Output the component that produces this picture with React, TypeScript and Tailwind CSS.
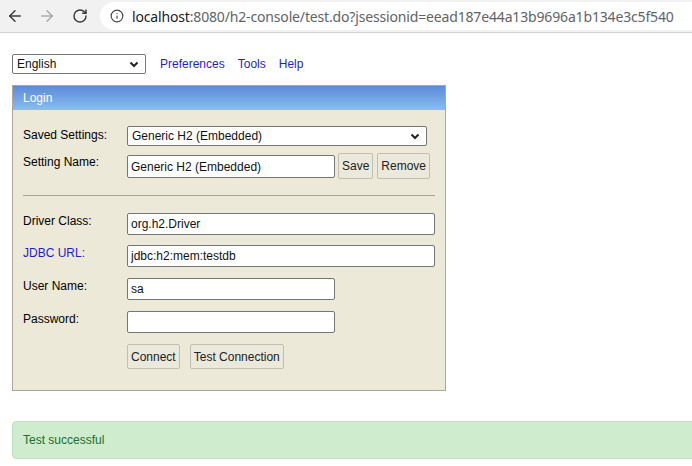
import { ArrowLeft, ArrowRight, RotateCw, Info } from 'lucide-react'

const Chevron = () => (
  <svg width="10" height="7" viewBox="0 0 10 7" className="shrink-0">
    <path d="M1.5 1.5 L5 5 L8.5 1.5" fill="none" stroke="#222" strokeWidth="2" />
  </svg>
)

function FakeSelect({ value, width }: { value: string; width: string }) {
  return (
    <div
      className={`${width} h-[20px] flex items-center justify-between bg-white border border-[#767676] rounded-[2px] pl-[4px] pr-[6px] text-[#111]`}
    >
      <span>{value}</span>
      <Chevron />
    </div>
  )
}

function Field({ value, wide }: { value: string; wide?: boolean }) {
  return (
    <input
      readOnly
      defaultValue={value}
      className={`${wide ? 'w-[308px]' : 'w-[208px]'} h-[22px] bg-white border border-[#767676] rounded-[2px] px-[3px] text-[#111] outline-none`}
    />
  )
}

function Btn({ label }: { label: string }) {
  return (
    <button className="h-[25px] px-[3px] bg-[#ebe8dc] border border-[#c2beb1] rounded-[2px] text-[#222]">
      {label}
    </button>
  )
}

export default function App() {
  const labelCls = 'w-[104px] shrink-0 leading-[14px] pt-[1px]'

  return (
    <div className="w-[692px] h-[466px] overflow-hidden bg-white font-['Liberation_Sans',Arial,sans-serif] text-[12px] text-black">
      {/* browser chrome */}
      <div className="h-[33px] bg-[#f1f1f1] border-b border-[#d3d3d3] flex items-center">
        <div className="flex items-center pl-[6px] gap-[14px]">
          <ArrowLeft size={18} strokeWidth={2} color="#3c3c3c" />
          <ArrowRight size={18} strokeWidth={2} color="#a9a9a9" />
          <RotateCw size={16} strokeWidth={2.2} color="#3c3c3c" className="ml-[2px]" />
        </div>
        <div className="ml-[12px] h-[28px] flex-1 bg-white rounded-l-full flex items-center pl-[10px] font-['Noto_Sans',sans-serif] text-[14px] tracking-[-0.16px]">
          <Info size={14} strokeWidth={2} color="#444" />
          <span className="ml-[8px] text-[#202124]">localhost</span>
          <span className="text-[#5f6368]">:8080/h2-console/test.do?jsessionid=eead187e44a13b9696a1b134e3c5f540</span>
        </div>
      </div>

      <div className="pl-[12px] pt-[21px]">
        {/* toolbar */}
        <div className="flex items-center h-[20px]">
          <FakeSelect value="English" width="w-[134px]" />
          <a className="ml-[14px] text-[#1f1fc4]">Preferences</a>
          <a className="ml-[13px] text-[#1f1fc4]">Tools</a>
          <a className="ml-[13px] text-[#1f1fc4]">Help</a>
        </div>

        {/* login panel */}
        <div className="mt-[11px] w-[434px] border border-[#aca899] bg-[#ece9d8] pb-[21px]">
          <div className="h-[24px] bg-gradient-to-b from-[#5a8bd7] to-[#8cbcf3] text-white flex items-center px-[10px]">
            Login
          </div>
          <div className="px-[10px] pt-[16px]">
            <div className="flex items-start">
              <div className={labelCls + ' pt-[2px]'}>Saved Settings:</div>
              <FakeSelect value="Generic H2 (Embedded)" width="w-[300px]" />
            </div>
            <div className="flex items-start mt-[7px]">
              <div className={labelCls + ' pt-[2px]'}>Setting Name:</div>
              <div className="mt-[2px]">
                <input
                  readOnly
                  defaultValue="Generic H2 (Embedded)"
                  className="w-[208px] h-[23px] bg-white border border-[#767676] rounded-[2px] px-[3px] text-[#111] outline-none"
                />
              </div>
              <div className="ml-[3px] flex gap-[4px]">
                <button className="h-[26px] px-[3px] bg-[#ebe8dc] border border-[#c2beb1] rounded-[2px] text-[#222]">Save</button>
                <button className="h-[26px] px-[3px] bg-[#ebe8dc] border border-[#c2beb1] rounded-[2px] text-[#222]">Remove</button>
              </div>
            </div>
            <div className="mt-[16px] h-px bg-[#a3a199]" />
            <div className="flex items-start mt-[17px]">
              <div className={labelCls}>Driver Class:</div>
              <Field value="org.h2.Driver" wide />
            </div>
            <div className="flex items-start mt-[10px]">
              <div className={labelCls + ' text-[#1f1fc4]'}>JDBC URL:</div>
              <Field value="jdbc:h2:mem:testdb" wide />
            </div>
            <div className="flex items-start mt-[11px]">
              <div className={labelCls}>User Name:</div>
              <Field value="sa" />
            </div>
            <div className="flex items-start mt-[11px]">
              <div className={labelCls}>Password:</div>
              <Field value="" />
            </div>
            <div className="flex items-start mt-[11px] pl-[104px] gap-[10px]">
              <Btn label="Connect" />
              <Btn label="Test Connection" />
            </div>
          </div>
        </div>

        {/* status */}
        <div className="mt-[30px] w-[700px] h-[38px] bg-[#cfeccf] border border-[#bfe0c0] rounded-[4px] flex items-center px-[10px] text-[#236b2e]">
          Test successful
        </div>
      </div>
    </div>
  )
}
